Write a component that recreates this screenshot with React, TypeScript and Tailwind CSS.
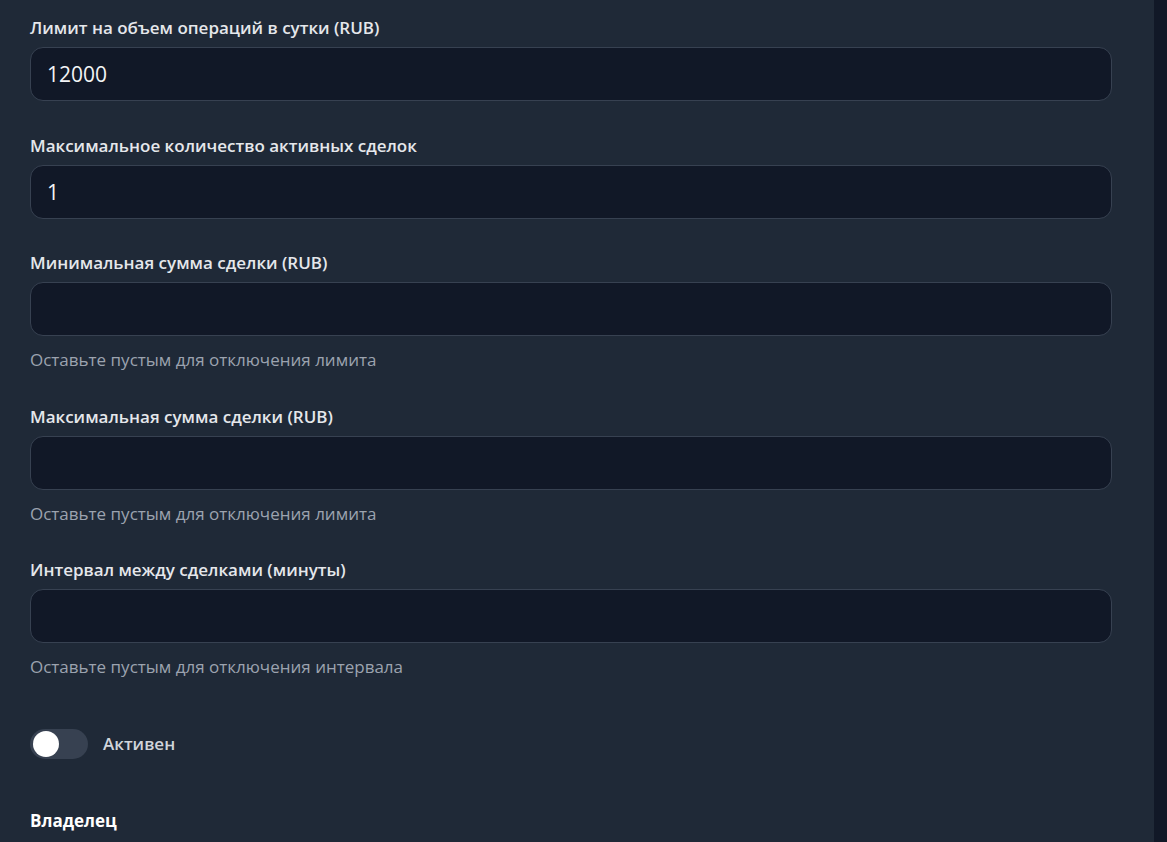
import { useState } from 'react';

type Field = {
  label: string;
  value: string;
  hint?: string;
};

const fields: Field[] = [
  { label: 'Лимит на объем операций в сутки (RUB)', value: '12000' },
  { label: 'Максимальное количество активных сделок', value: '1' },
  { label: 'Минимальная сумма сделки (RUB)', value: '', hint: 'Оставьте пустым для отключения лимита' },
  { label: 'Максимальная сумма сделки (RUB)', value: '', hint: 'Оставьте пустым для отключения лимита' },
  { label: 'Интервал между сделками (минуты)', value: '', hint: 'Оставьте пустым для отключения интервала' },
];

function FormField({ field }: { field: Field }) {
  const [value, setValue] = useState(field.value);
  return (
    <div className="flex flex-col">
      <label className="mb-[7px] text-[17px] leading-[24px] font-semibold text-[#e5e7eb]">{field.label}</label>
      <input
        className="h-[54px] w-full rounded-[13px] border border-[#374151] bg-[#111827] px-[16px] text-[21px] text-[#f3f4f6] outline-none"
        value={value}
        onChange={(e) => setValue(e.target.value)}
      />
      {field.hint ? (
        <p className="mt-[12px] text-[17px] leading-[24px] text-[#9ca3af]">{field.hint}</p>
      ) : null}
    </div>
  );
}

export default function App() {
  const [active, setActive] = useState(false);

  return (
    <div className="flex h-[842px] w-full overflow-hidden bg-[#1f2937] font-['Open_Sans',sans-serif]">
      <div className="flex flex-1 flex-col pt-[16px] pr-[42px] pl-[30px]">
        <div className="flex flex-col gap-[32.5px]">
          {fields.map((f) => (
            <FormField key={f.label} field={f} />
          ))}
        </div>

        <div className="mt-[50px] flex items-center gap-[15px]">
          <button
            className="relative h-[30px] w-[58px] rounded-full bg-[#374151]"
            onClick={() => setActive(!active)}
          >
            <span
              className={
                active
                  ? 'absolute top-[2px] left-[30px] h-[26px] w-[26px] rounded-full bg-white'
                  : 'absolute top-[2px] left-[3px] h-[26px] w-[26px] rounded-full bg-white'
              }
            />
          </button>
          <span className="text-[17px] leading-[24px] font-semibold text-[#d1d5db]">Активен</span>
        </div>

        <div className="mt-[50px] text-[17px] leading-[24px] font-bold text-white">Владелец</div>
      </div>
      <div className="w-[13px] bg-[#111827]" />
    </div>
  );
}
